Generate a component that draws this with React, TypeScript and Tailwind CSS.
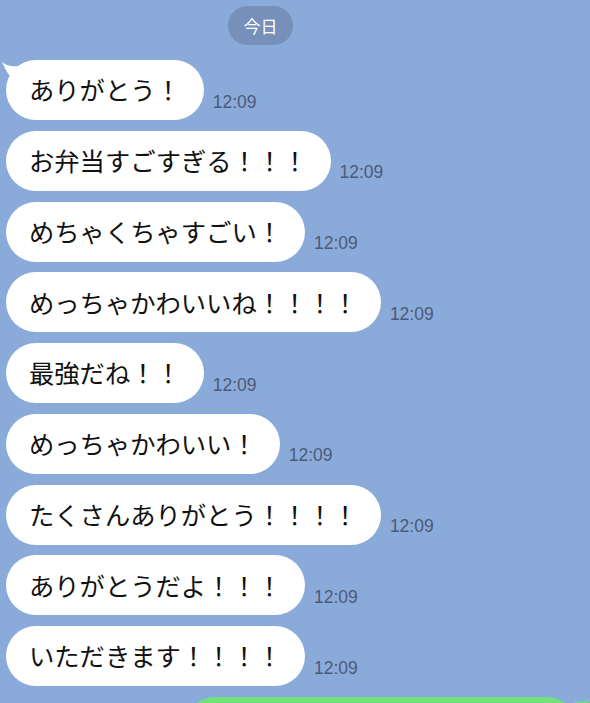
const messages = [
  'ありがとう！',
  'お弁当すごすぎる！！！',
  'めちゃくちゃすごい！',
  'めっちゃかわいいね！！！！',
  '最強だね！！',
  'めっちゃかわいい！',
  'たくさんありがとう！！！！',
  'ありがとうだよ！！！',
  'いただきます！！！！',
]

const jp = "font-['Noto_Sans_CJK_JP',sans-serif]"

const Bubble = ({ text, first }: { text: string; first?: boolean }) => (
  <div className="flex shrink-0 items-end">
    <div className={`relative ml-[6px] flex h-[60px] items-center rounded-full bg-white px-[23px] text-[25.3px] leading-none text-[#111] ${jp}`}>
      {first && (
        <svg className="absolute left-[-5px] top-[1px]" width="24" height="26" viewBox="0 0 24 26">
          <path d="M1 1 C6 5 11 6 20 5 L20 24 C12 22 6 12 1 1 Z" fill="#fff" />
        </svg>
      )}
      <span className="relative">{text}</span>
    </div>
    <span className="mb-[9px] ml-[9px] font-['Liberation_Sans',sans-serif] text-[17.5px] leading-none text-[#4b5a78]">
      12:09
    </span>
  </div>
)

export default function App() {
  return (
    <div className="flex h-[703px] w-[590px] flex-col overflow-hidden bg-[#8aabd9]">
      <div className={`ml-[228px] mt-[6px] flex h-[39px] w-[65px] shrink-0 items-center justify-center rounded-full bg-[#7690b9] text-[17px] text-white ${jp}`}>
        今日
      </div>
      <div className="mt-[15px] flex shrink-0 flex-col gap-[10.75px]">
        {messages.map((m, i) => (
          <Bubble key={i} text={m} first={i === 0} />
        ))}
        <div className="relative ml-[185px] h-[60px] w-[392px] shrink-0 rounded-[30px] bg-[#6fe27a]">
          <svg className="absolute right-[-14px] top-[1px]" width="22" height="22" viewBox="0 0 22 22">
            <path d="M21 1 C16 4 12 4 6 4 L6 20 C12 18 14 10 21 1 Z" fill="#6fe27a" />
          </svg>
        </div>
      </div>
    </div>
  )
}
